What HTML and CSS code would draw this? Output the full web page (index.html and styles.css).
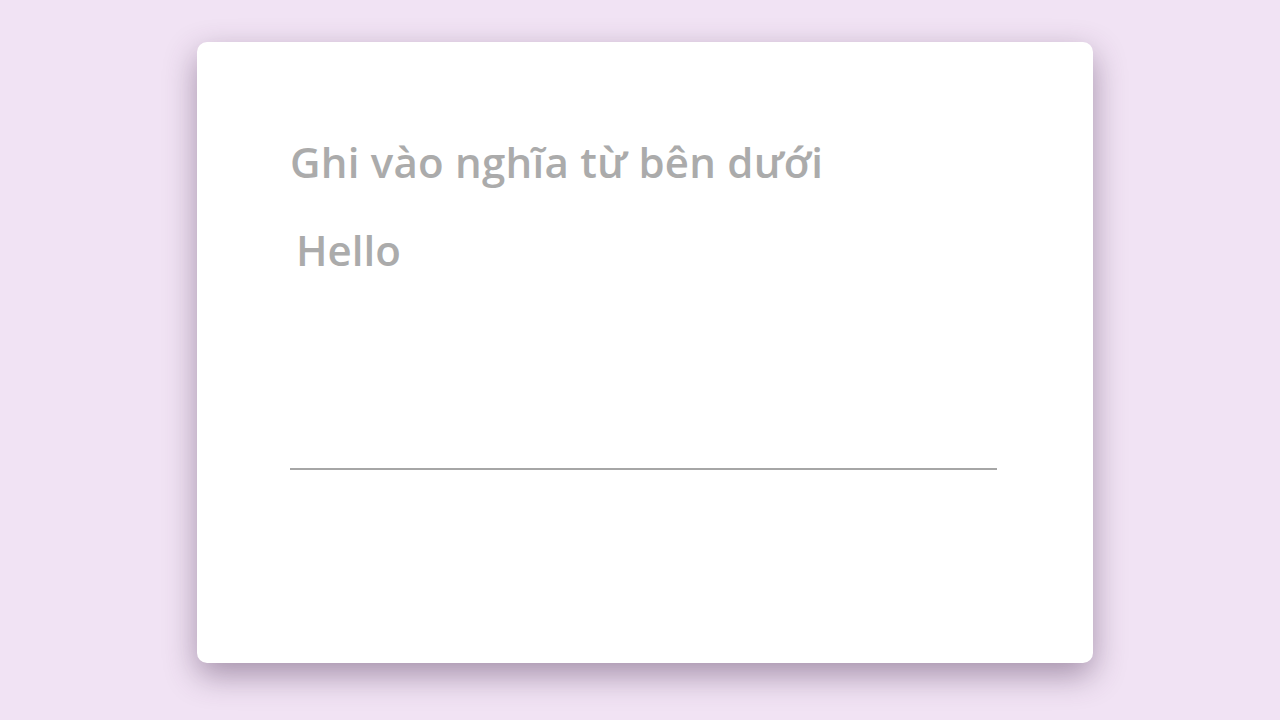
FILE: index.html
```html
<!DOCTYPE html>
<html lang="vi">
<head>
<meta charset="utf-8">
<title>Quiz</title>
<link rel="stylesheet" href="styles.css">
</head>
<body>
<main class="page">
  <section class="card">
    <h1 class="title">Ghi vào nghĩa từ bên dưới</h1>
    <p class="word">Hello</p>
    <div class="answer"></div>
  </section>
</main>
</body>
</html>
```
FILE: styles.css
```css
html, body {
  margin: 0;
  padding: 0;
  height: 100%;
}
body {
  background: #f1e3f4;
  font-family: "Open Sans", "Noto Sans", sans-serif;
}
.page {
  display: flex;
  justify-content: center;
  padding: 42px 0 0 10px;
}
.card {
  width: 896px;
  height: 621px;
  box-sizing: border-box;
  background: #ffffff;
  border-radius: 10px;
  box-shadow: 0 12px 32px rgba(70, 45, 80, 0.45);
  padding: 92px 96px 0 93px;
}
.title {
  margin: 0;
  font-size: 42px;
  line-height: 56px;
  font-weight: 600;
  letter-spacing: 0.25px;
  color: #ababab;
}
.word {
  margin: 32px 0 0 6px;
  font-size: 42px;
  line-height: 56px;
  font-weight: 600;
  color: #ababab;
}
.answer {
  margin-top: 190px;
  height: 2px;
  background: #a6a6a6;
}
```
